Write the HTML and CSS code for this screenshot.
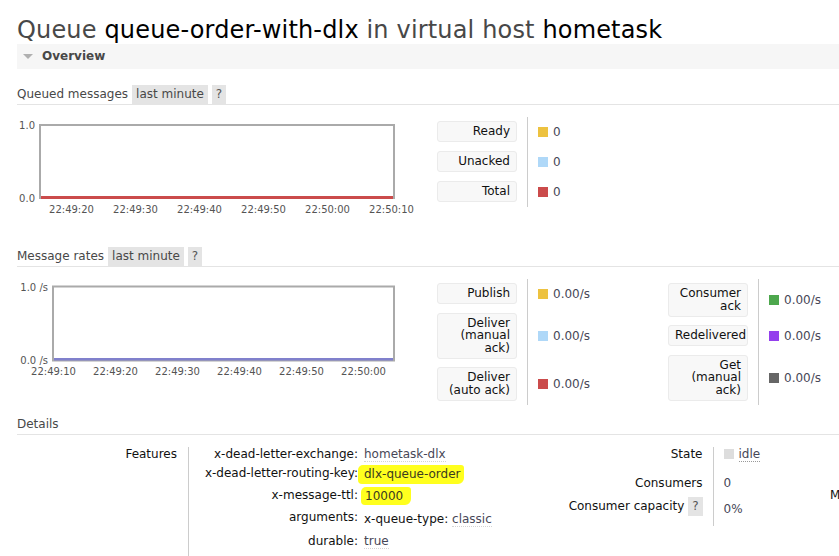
FILE: index.html
```html
<!DOCTYPE html>
<html lang="en">
<head>
<meta charset="utf-8">
<title>Queue queue-order-with-dlx</title>
<link rel="stylesheet" href="styles.css">
</head>
<body>
<div class="page">
  <h1 class="title"><span class="muted">Queue</span> queue-order-with-dlx <span class="muted">in virtual host</span> hometask</h1>

  <div class="section-head"><span class="tri"></span>Overview</div>

  <div class="sub-head">Queued messages <span class="pill">last minute</span> <span class="pill help">?</span></div>
  <div class="chart-row">
    <svg class="chart" width="420" height="120" viewBox="0 0 420 120">
      <rect x="23" y="8" width="354" height="73" fill="#fff" stroke="#aaaaaa" stroke-width="2"/>
      <line x1="24" y1="80.5" x2="376" y2="80.5" stroke="#cb4b4b" stroke-width="3"/>
      <text class="axis" x="18" y="12" text-anchor="end">1.0</text>
      <text class="axis" x="18" y="84.5" text-anchor="end">0.0</text>
      <text class="axis" x="54.5" y="96" text-anchor="middle">22:49:20</text>
      <text class="axis" x="118.5" y="96" text-anchor="middle">22:49:30</text>
      <text class="axis" x="182.5" y="96" text-anchor="middle">22:49:40</text>
      <text class="axis" x="246.5" y="96" text-anchor="middle">22:49:50</text>
      <text class="axis" x="310.5" y="96" text-anchor="middle">22:50:00</text>
      <text class="axis" x="374.5" y="96" text-anchor="middle">22:50:10</text>
    </svg>
    <div class="legends">
      <table class="legend legend-q">
        <tr><th><div class="lbl">Ready</div></th><td><span class="sq c-yellow"></span>0</td></tr>
        <tr><th><div class="lbl">Unacked</div></th><td><span class="sq c-blue"></span>0</td></tr>
        <tr><th><div class="lbl">Total</div></th><td><span class="sq c-red"></span>0</td></tr>
      </table>
    </div>
  </div>

  <div class="sub-head">Message rates <span class="pill">last minute</span> <span class="pill help">?</span></div>
  <div class="chart-row">
    <svg class="chart" width="420" height="100" viewBox="0 0 420 100">
      <rect x="36" y="7.5" width="341" height="74" fill="#fff" stroke="#aaaaaa" stroke-width="2"/>
      <line x1="37" y1="80.3" x2="376" y2="80.3" stroke="#8080cc" stroke-width="2.4"/>
      <text class="axis" x="31" y="12" text-anchor="end">1.0 /s</text>
      <text class="axis" x="31" y="84.5" text-anchor="end">0.0 /s</text>
      <text class="axis" x="36.5" y="96" text-anchor="middle">22:49:10</text>
      <text class="axis" x="98.5" y="96" text-anchor="middle">22:49:20</text>
      <text class="axis" x="160.5" y="96" text-anchor="middle">22:49:30</text>
      <text class="axis" x="222.5" y="96" text-anchor="middle">22:49:40</text>
      <text class="axis" x="284.5" y="96" text-anchor="middle">22:49:50</text>
      <text class="axis" x="346.5" y="96" text-anchor="middle">22:50:00</text>
    </svg>
    <div class="legends">
      <table class="legend">
        <tr><th><div class="lbl">Publish</div></th><td><span class="sq c-yellow"></span>0.00/s</td></tr>
        <tr><th><div class="lbl">Deliver<br>(manual<br>ack)</div></th><td><span class="sq c-blue"></span>0.00/s</td></tr>
        <tr><th><div class="lbl">Deliver<br>(auto ack)</div></th><td><span class="sq c-red"></span>0.00/s</td></tr>
      </table>
      <table class="legend">
        <tr><th><div class="lbl">Consumer<br>ack</div></th><td><span class="sq c-green"></span>0.00/s</td></tr>
        <tr><th><div class="lbl">Redelivered</div></th><td><span class="sq c-purple"></span>0.00/s</td></tr>
        <tr><th><div class="lbl">Get<br>(manual<br>ack)</div></th><td><span class="sq c-grey"></span>0.00/s</td></tr>
      </table>
    </div>
  </div>

  <div class="sub-head">Details</div>
  <div class="details">
    <table class="facts features">
      <tr>
        <th>Features</th>
        <td>
          <table class="args">
            <tr><th>x-dead-letter-exchange:</th><td><span class="val">hometask-dlx</span></td></tr>
            <tr class="r-hl"><th>x-dead-letter-routing-key:</th><td><span class="hl hl-key">dlx-queue-order</span></td></tr>
            <tr class="r-hl"><th>x-message-ttl:</th><td><span class="hl hl-ttl">10000</span></td></tr>
            <tr class="r-args"><th>arguments:</th><td><span class="key">x-queue-type:</span> <span class="val">classic</span></td></tr>
            <tr><th>durable:</th><td><span class="val">true</span></td></tr>
          </table>
        </td>
      </tr>
    </table>

    <table class="facts state">
      <tr class="r1"><th>State</th><td><span class="sq c-idle"></span><span class="idle">idle</span></td></tr>
      <tr class="r2"><th>Consumers</th><td>0</td></tr>
      <tr class="r3"><th>Consumer capacity <span class="pill help">?</span></th><td class="cap">0%</td></tr>
    </table>

    <div class="more">Messages</div>
  </div>
</div>
</body>
</html>
```

FILE: styles.css
```css
html, body {
  margin: 0;
  padding: 0;
  overflow: hidden;
  background: #fff;
}

body {
  font-family: "DejaVu Sans", Verdana, sans-serif;
  font-size: 12px;
  color: #222;
}

.page {
  width: 1100px;
  padding-left: 17px;
}

.title {
  margin: 16px 0 0;
  font-size: 24px;
  line-height: 28px;
  font-weight: normal;
  letter-spacing: 0.16px;
  color: #000;
  white-space: nowrap;
}

.title .muted {
  color: #484848;
}

.section-head {
  height: 25px;
  line-height: 25px;
  background: #f6f6f6;
  font-weight: bold;
  color: #484848;
  display: flex;
  align-items: center;
}

.tri {
  width: 0;
  height: 0;
  border-left: 5px solid transparent;
  border-right: 5px solid transparent;
  border-top: 5px solid #b0b0b0;
  margin: 0 9px 0 6px;
}

.sub-head {
  margin-top: 16px;
  height: 19px;
  line-height: 19px;
  border-bottom: 1px solid #e4e4e4;
  color: #484848;
  display: flex;
  align-items: flex-end;
  gap: 4px;
  white-space: nowrap;
}

.chart-row + .sub-head {
  margin-top: 10px;
}

.pill {
  display: inline-block;
  background: #e4e4e4;
  padding: 0 4px;
  line-height: 19px;
  color: #484848;
}

.pill.help {
  color: #555;
}

.chart-row {
  margin-top: 12px;
  display: flex;
  align-items: flex-start;
}

.chart {
  display: block;
  flex: none;
}

.axis {
  font-family: "DejaVu Sans", Verdana, sans-serif;
  font-size: 10px;
  fill: #545454;
}

.legends {
  display: flex;
  align-items: flex-start;
}

.legend {
  border-collapse: collapse;
}

.legend th {
  padding: 4px 10px 4.5px 0;
  vertical-align: top;
  font-weight: normal;
}

.legend-q th {
  padding-bottom: 5px;
}

.legend td {
  border-left: 1px solid #cccccc;
  padding: 0 0 0 10px;
  width: 130px;
  vertical-align: middle;
  color: #474757;
  white-space: nowrap;
}

.lbl {
  box-sizing: border-box;
  width: 80px;
  padding: 3px 6px 3.5px;
  line-height: 12.5px;
  text-align: right;
  background: #f8f8f8;
  border: 1px solid #ebebeb;
  border-radius: 3px;
  color: #111;
}

.sq {
  display: inline-block;
  width: 10px;
  height: 10px;
  margin-right: 5px;
  vertical-align: -1px;
}

.c-yellow { background: #edc240; }
.c-blue { background: #afd8f8; }
.c-red { background: #cb4b4b; }
.c-green { background: #4da74d; }
.c-purple { background: #9440ed; }
.c-grey { background: #666666; }
.c-idle { background: #dddddd; }

.details {
  margin-top: 12px;
  display: flex;
  align-items: flex-start;
}

.facts {
  border-collapse: collapse;
}

.facts > tbody > tr > th,
.facts > tr > th {
  font-weight: normal;
  text-align: right;
  vertical-align: top;
  color: #111;
  line-height: 14px;
  white-space: nowrap;
}

.features {
  width: 540px;
  flex: none;
}

.features > tbody > tr > th {
  width: 160px;
  padding: 0 11px 0 0;
}

.features > tbody > tr > td {
  border-left: 1px solid #cccccc;
  padding: 0 0 10px 10px;
  vertical-align: top;
}

.args {
  border-collapse: collapse;
}

.args th {
  width: 159px;
  padding: 0 6px 5px 0;
  font-weight: normal;
  text-align: right;
  vertical-align: top;
  line-height: 14px;
  color: #111;
  white-space: nowrap;
}

.args td {
  padding: 0 0 5px 0;
  vertical-align: top;
  line-height: 14px;
  color: #474757;
  white-space: nowrap;
}

.args .r-hl th { padding-top: 0; padding-bottom: 8px; }
.args .r-hl td { padding-bottom: 3px; }
.args .r-args th,
.args .r-args td { padding-bottom: 7px; }

.key {
  color: #111;
}

.val {
  border-bottom: 1px dotted #d4d4d4;
}

.args .r-args .val {
  display: inline-block;
  margin-top: 2px;
  line-height: 14px;
}

.hl {
  display: inline-block;
  background: #ffff1e;
  line-height: 14px;
  color: #3a3a20;
  border-radius: 5px 3px 6px 4px;
}

.hl-key {
  padding: 2px 3px 3px 6px;
  margin: -1px 0 0 -6px;
}

.hl-ttl {
  padding: 2px 8px 2px 4px;
  margin: -1px 0 0 -3px;
}

.state {
  flex: none;
}

.state th {
  box-sizing: border-box;
  width: 156px;
  padding: 0 10px 0 0;
}

.state td {
  box-sizing: border-box;
  width: 117px;
  border-left: 1px solid #cccccc;
  padding: 0 0 0 10px;
  vertical-align: top;
  line-height: 14px;
  color: #474757;
  white-space: nowrap;
}

.state .r1 th, .state .r1 td { padding-bottom: 15px; }
.state .r2 th, .state .r2 td { padding-bottom: 7px; }
.state .r3 th { padding-bottom: 10px; line-height: 19px; }
.state .r3 td.cap { padding-top: 5px; }

.state .r1 .sq {
  margin-right: 5px;
  vertical-align: -1px;
}

.idle {
  border-bottom: 1px dotted #999;
}

.more {
  padding-top: 41px;
  line-height: 14px;
  color: #111;
  white-space: nowrap;
}
```
